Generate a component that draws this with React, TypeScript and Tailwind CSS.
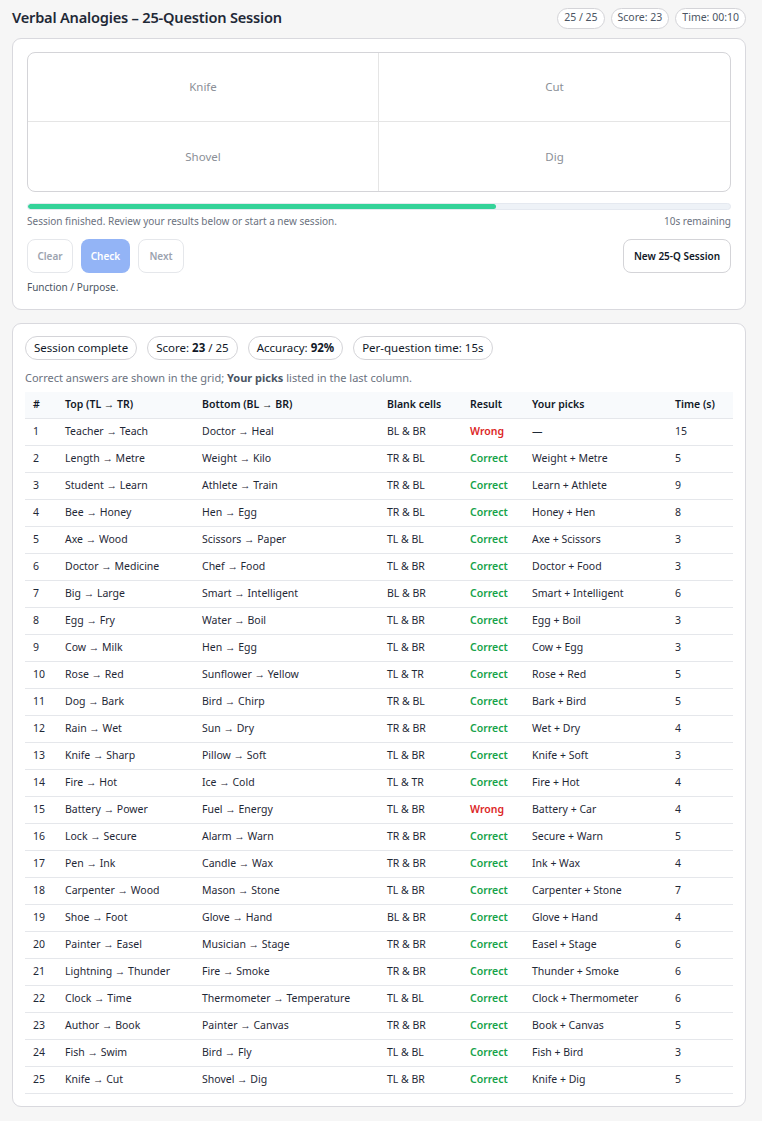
import React from "react";

const rows: [string, string, string, string, boolean, string, string][] = [
  ["1", "Teacher → Teach", "Doctor → Heal", "BL & BR", false, "—", "15"],
  ["2", "Length → Metre", "Weight → Kilo", "TR & BL", true, "Weight + Metre", "5"],
  ["3", "Student → Learn", "Athlete → Train", "TR & BL", true, "Learn + Athlete", "9"],
  ["4", "Bee → Honey", "Hen → Egg", "TR & BL", true, "Honey + Hen", "8"],
  ["5", "Axe → Wood", "Scissors → Paper", "TL & BL", true, "Axe + Scissors", "3"],
  ["6", "Doctor → Medicine", "Chef → Food", "TL & BR", true, "Doctor + Food", "3"],
  ["7", "Big → Large", "Smart → Intelligent", "BL & BR", true, "Smart + Intelligent", "6"],
  ["8", "Egg → Fry", "Water → Boil", "TL & BR", true, "Egg + Boil", "3"],
  ["9", "Cow → Milk", "Hen → Egg", "TL & BR", true, "Cow + Egg", "3"],
  ["10", "Rose → Red", "Sunflower → Yellow", "TL & TR", true, "Rose + Red", "5"],
  ["11", "Dog → Bark", "Bird → Chirp", "TR & BL", true, "Bark + Bird", "5"],
  ["12", "Rain → Wet", "Sun → Dry", "TR & BR", true, "Wet + Dry", "4"],
  ["13", "Knife → Sharp", "Pillow → Soft", "TL & BR", true, "Knife + Soft", "3"],
  ["14", "Fire → Hot", "Ice → Cold", "TL & TR", true, "Fire + Hot", "4"],
  ["15", "Battery → Power", "Fuel → Energy", "TL & BR", false, "Battery + Car", "4"],
  ["16", "Lock → Secure", "Alarm → Warn", "TR & BR", true, "Secure + Warn", "5"],
  ["17", "Pen → Ink", "Candle → Wax", "TR & BR", true, "Ink + Wax", "4"],
  ["18", "Carpenter → Wood", "Mason → Stone", "TL & BR", true, "Carpenter + Stone", "7"],
  ["19", "Shoe → Foot", "Glove → Hand", "BL & BR", true, "Glove + Hand", "4"],
  ["20", "Painter → Easel", "Musician → Stage", "TR & BR", true, "Easel + Stage", "6"],
  ["21", "Lightning → Thunder", "Fire → Smoke", "TR & BR", true, "Thunder + Smoke", "6"],
  ["22", "Clock → Time", "Thermometer → Temperature", "TL & BL", true, "Clock + Thermometer", "6"],
  ["23", "Author → Book", "Painter → Canvas", "TR & BR", true, "Book + Canvas", "5"],
  ["24", "Fish → Swim", "Bird → Fly", "TL & BL", true, "Fish + Bird", "3"],
  ["25", "Knife → Cut", "Shovel → Dig", "TL & BR", true, "Knife + Dig", "5"],
];

const widths = ["w-[32px]", "w-[137px]", "w-[185px]", "w-[83px]", "w-[62px]", "w-[143px]", ""];

export default function App() {
  return (
    <div
      className="min-h-[1121px] bg-[#f6f6f6] pl-3 pr-4 pt-[7px] pb-4 text-[#1f2937]"
      style={{ fontFamily: '"Noto Sans", "Open Sans", sans-serif' }}
    >
      <div className="flex items-center justify-between h-[22px]">
        <h1 className="text-[14.6px] font-semibold text-[#1f2937] tracking-[-0.2px]">Verbal Analogies – 25-Question Session</h1>
        <div className="flex gap-[6px]">
          {["25 / 25", "Score: 23", "Time: 00:10"].map((t) => (
            <span key={t} className="rounded-full border border-[#d4d4d8] bg-white px-[6px] h-[21px] flex items-center text-[10.5px] text-[#4b5563]">
              {t}
            </span>
          ))}
        </div>
      </div>

      <div className="mt-[9px] rounded-[9px] border border-[#d9d9de] bg-white px-[14px] pt-[13px] pb-[15px]">
        <div className="grid grid-cols-2 rounded-[8px] border border-[#d4d4d8] overflow-hidden">
          {["Knife", "Cut", "Shovel", "Dig"].map((w, i) => (
            <div
              key={w}
              className={`h-[69px] flex items-center justify-center text-[11.5px] text-[#8b8f97] ${i % 2 === 0 ? "border-r border-[#e5e5e5]" : ""} ${i < 2 ? "border-b border-[#e5e5e5]" : ""}`}
            >
              {w}
            </div>
          ))}
        </div>
        <div className="mt-[11px] h-[7px] rounded-full bg-[#eef2f7] border border-[#e5e9f0] overflow-hidden">
          <div className="h-full bg-[#34d399] rounded-full" style={{ width: "66.7%" }} />
        </div>
        <div className="mt-[4px] flex justify-between text-[10px] leading-[14px] text-[#6b7280]">
          <span>Session finished. Review your results below or start a new session.</span>
          <span>10s remaining</span>
        </div>
        <div className="mt-[11px] flex items-center justify-between">
          <div className="flex gap-[8px]">
            <button className="h-[34px] w-[46px] rounded-[8px] border border-[#e5e7eb] bg-white text-[10px] font-semibold text-[#9ca3af]">Clear</button>
            <button className="h-[34px] w-[49px] rounded-[8px] bg-[#93b4f6] text-[10px] font-semibold text-white">Check</button>
            <button className="h-[34px] w-[46px] rounded-[8px] border border-[#e5e7eb] bg-white text-[10px] font-semibold text-[#9ca3af]">Next</button>
          </div>
          <button className="h-[34px] w-[108px] rounded-[8px] border border-[#d4d4d8] bg-white text-[10px] font-semibold text-[#111827]">New 25-Q Session</button>
        </div>
        <div className="mt-[7px] text-[10px] leading-[14px] text-[#4b5563]">Function / Purpose.</div>
      </div>

      <div className="mt-[13px] rounded-[9px] border border-[#d9d9de] bg-white px-[12px] pt-[12px] pb-[12px]">
        <div className="flex gap-[10px]">
          <span className="rounded-full border border-[#d4d4d8] h-[24px] px-[8px] flex items-center text-[11.5px] text-[#111827]">Session complete</span>
          <span className="rounded-full border border-[#d4d4d8] h-[24px] px-[8px] flex items-center text-[11.5px] text-[#111827]">
            Score:&nbsp;<b>23</b>&nbsp;/ 25
          </span>
          <span className="rounded-full border border-[#d4d4d8] h-[24px] px-[8px] flex items-center text-[11.5px] text-[#111827]">
            Accuracy:&nbsp;<b>92%</b>
          </span>
          <span className="rounded-full border border-[#d4d4d8] h-[24px] px-[8px] flex items-center text-[11.5px] text-[#111827]">Per-question time: 15s</span>
        </div>
        <div className="mt-[10px] text-[11px] text-[#6b7280]">
          Correct answers are shown in the grid; <b className="text-[#4b5563]">Your picks</b> listed in the last column.
        </div>
        <table className="mt-[5px] w-full table-fixed border-collapse text-[10.5px]">
          <thead>
            <tr className="bg-[#f8fafc] h-[27px] border-b border-[#e5e7eb]">
              {["#", "Top (TL → TR)", "Bottom (BL → BR)", "Blank cells", "Result", "Your picks", "Time (s)"].map((h, i) => (
                <th key={h} className={`box-border text-left font-semibold px-[8px] text-[#111827] ${widths[i]}`}>{h}</th>
              ))}
            </tr>
          </thead>
          <tbody>
            {rows.map((r) => (
              <tr key={r[0]} className="h-[27px] border-b border-[#e5e7eb] text-[#1f2937]">
                <td className="px-[8px]">{r[0]}</td>
                <td className="px-[8px]">{r[1]}</td>
                <td className="px-[8px]">{r[2]}</td>
                <td className="px-[8px]">{r[3]}</td>
                <td className={`px-[8px] font-semibold ${r[4] ? "text-[#16a34a]" : "text-[#dc2626]"}`}>{r[4] ? "Correct" : "Wrong"}</td>
                <td className="px-[8px]">{r[5]}</td>
                <td className="px-[8px]">{r[6]}</td>
              </tr>
            ))}
          </tbody>
        </table>
      </div>
    </div>
  );
}
